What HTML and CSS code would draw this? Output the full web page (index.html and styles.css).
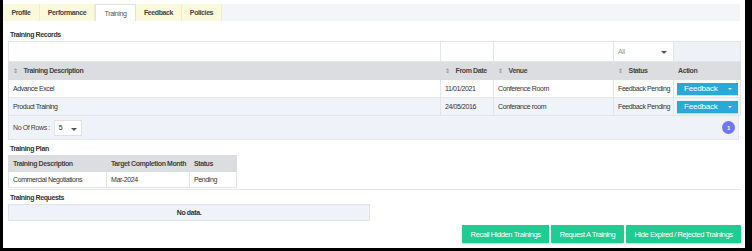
FILE: index.html
```html
<!DOCTYPE html>
<html lang="en">
<head>
  <meta charset="UTF-8">
  <title>Employee - Training</title>
  <link rel="stylesheet" href="styles.css">
</head>
<body>
  <div class="frame">
    <div class="tabs">
      <a class="tab" href="#">Profile</a>
      <a class="tab" href="#">Performance</a>
      <a class="tab active" href="#">Training</a>
      <a class="tab" href="#">Feedback</a>
      <a class="tab" href="#">Policies</a>
    </div>

    <div class="content">
      <h3>Training Records</h3>
      <table class="grid records">
        <colgroup>
          <col style="width: 432px">
          <col style="width: 53px">
          <col style="width: 120px">
          <col style="width: 60px">
          <col>
        </colgroup>
        <thead>
          <tr class="filters">
            <td></td>
            <td></td>
            <td></td>
            <td><div class="select">All<span class="caret"></span></div></td>
            <td class="blank"></td>
          </tr>
          <tr class="head">
            <th><span class="sort">&#8661;</span>Training Description</th>
            <th><span class="sort">&#8661;</span>From Date</th>
            <th><span class="sort">&#8661;</span>Venue</th>
            <th><span class="sort">&#8661;</span>Status</th>
            <th>Action</th>
          </tr>
        </thead>
        <tbody>
          <tr>
            <td>Advance Excel</td>
            <td>11/01/2021</td>
            <td>Conference Room</td>
            <td>Feedback Pending</td>
            <td><button class="fb">Feedback<span class="caret white"></span></button></td>
          </tr>
          <tr class="alt">
            <td>Product Training</td>
            <td>24/05/2016</td>
            <td>Conferance room</td>
            <td>Feedback Pending</td>
            <td><button class="fb">Feedback<span class="caret white"></span></button></td>
          </tr>
        </tbody>
      </table>
      <div class="pager">
        <span>No Of Rows :</span>
        <div class="select rows">5<span class="caret"></span></div>
        <span class="page">1</span>
      </div>

      <h3 class="plan-title">Training Plan</h3>
      <table class="grid plan">
        <tr class="head">
          <th>Training Description</th>
          <th>Target Completion Month</th>
          <th>Status</th>
        </tr>
        <tr>
          <td>Commercial Negotiations</td>
          <td>Mar-2024</td>
          <td>Pending</td>
        </tr>
      </table>
      <hr>

      <h3 class="req-title">Training Requests</h3>
      <div class="nodata">No data.</div>

      <div class="actions">
        <button class="btn">Recall Hidden Trainings</button>
        <button class="btn">Request A Training</button>
        <button class="btn">Hide Expired / Rejected Trainings</button>
      </div>
    </div>
  </div>
</body>
</html>
```

FILE: styles.css
```css
html, body {
  margin: 0;
  padding: 0;
  background: #fff;
}
body {
  font-family: "Liberation Sans", Arial, sans-serif;
  font-size: 7px;
  letter-spacing: -0.4px;
  color: #333;
}
button {
  font-family: inherit;
  font-size: 7px;
  letter-spacing: -0.4px;
}
.frame {
  width: 742px;
  height: 248px;
  border-left: 3px solid #000;
  border-right: 7px solid #000;
  border-bottom: 3px solid #000;
  overflow: hidden;
}
.tabs {
  display: flex;
  margin-top: 4px;
  height: 17px;
  background: #f4f5f9;
  width: 737px;
}
.tab {
  display: flex;
  align-items: center;
  justify-content: center;
  box-sizing: border-box;
  background: #fbf9dc;
  border-right: 1px solid #efecd0;
  color: #444;
  font-weight: bold;
  text-decoration: none;
}
.tab:nth-child(1) { width: 37px; }
.tab:nth-child(2) { width: 55px; }
.tab:nth-child(3) { width: 41px; }
.tab:nth-child(4) { width: 46px; }
.tab:nth-child(5) { width: 40px; }
.tab.active {
  background: #fff;
  color: #555;
  font-weight: normal;
  border: 1px solid #e3e3e3;
  border-bottom: none;
}
.content {
  padding: 0 2px 0 5px;
}
h3 {
  margin: 10px 0 3px 2px;
  font-size: 7px;
  font-weight: bold;
  color: #333;
}
.grid {
  border-collapse: collapse;
  table-layout: fixed;
}
.grid td, .grid th {
  border: 1px solid #e4e5e8;
  padding: 0 4px;
  text-align: left;
  white-space: nowrap;
  overflow: hidden;
}
.grid th {
  font-weight: bold;
  color: #444;
}
.records {
  width: 733px;
}
.filters td {
  height: 19px;
  background: #fff;
}
.filters td.blank {
  background: #eef1f5;
}
.select {
  position: relative;
  color: #999;
}
.caret {
  display: inline-block;
  width: 0;
  height: 0;
  border-left: 3px solid transparent;
  border-right: 3px solid transparent;
  border-top: 3px solid #555;
  position: absolute;
  right: 2px;
  top: 3px;
}
.caret.white {
  border-top-color: #fff;
  right: 6px;
  top: 5px;
  border-left-width: 2px;
  border-right-width: 2px;
  border-top-width: 2px;
}
.head th, .head td {
  height: 17px;
  background: #dcdde0;
  border-color: #dcdde0;
}
.sort {
  color: #888;
  font-weight: normal;
  font-size: 6px;
  margin-right: 6px;
}
.records tbody td {
  height: 17px;
  color: #333;
}
.records tbody tr.alt td {
  background: #f0f3fa;
}
.fb {
  position: relative;
  display: block;
  width: 61px;
  height: 12px;
  border: none;
  background: #29a9d9;
  color: #fff;
  font-size: 8px;
  letter-spacing: -0.2px;
  text-align: left;
  padding: 0 0 0 7px;
  margin-left: -1px;
  box-shadow: 0 1px 1px rgba(0, 0, 0, 0.15);
}
.pager {
  display: flex;
  align-items: center;
  width: 725px;
  height: 23px;
  padding: 0 0 0 4px;
  background: #eff2f9;
  border: 1px solid #e4e5e8;
  border-top: none;
  color: #444;
}
.select.rows {
  width: 22px;
  height: 14px;
  line-height: 14px;
  margin-left: 4px;
  padding-left: 4px;
  background: #fff;
  border: 1px solid #e2e2e2;
  color: #333;
}
.select.rows .caret {
  top: 7px;
  right: 4px;
}
.page {
  margin-left: auto;
  margin-right: 3px;
  width: 13px;
  height: 13px;
  border-radius: 50%;
  background: #6f77f5;
  color: #fff;
  font-size: 6px;
  font-weight: bold;
  display: flex;
  align-items: center;
  justify-content: center;
}
.plan-title {
  margin-top: 5px;
}
.plan {
  width: 229px;
}
.plan th, .plan td {
  height: 15px;
}
.plan th:nth-child(1) { width: 89px; }
.plan th:nth-child(2) { width: 74px; }
.plan td {
  color: #333;
}
hr {
  width: 733px;
  margin: 1px 0 0;
  border: none;
  border-top: 1px solid #e6e6e6;
}
.req-title {
  margin-top: 4px;
}
.nodata {
  width: 360px;
  height: 15px;
  line-height: 15px;
  background: #eff2f9;
  border: 1px solid #e2e4ea;
  text-align: center;
  font-weight: bold;
  color: #333;
}
.actions {
  display: flex;
  justify-content: flex-end;
  gap: 2px;
  width: 733px;
  margin-top: 4px;
}
.btn {
  height: 18px;
  padding: 0 8.5px;
  border: none;
  border-radius: 1px;
  background: #1fcc92;
  color: #fff;
  font-size: 7.5px;
  box-shadow: 0 1px 2px rgba(0, 0, 0, 0.2);
}
```
